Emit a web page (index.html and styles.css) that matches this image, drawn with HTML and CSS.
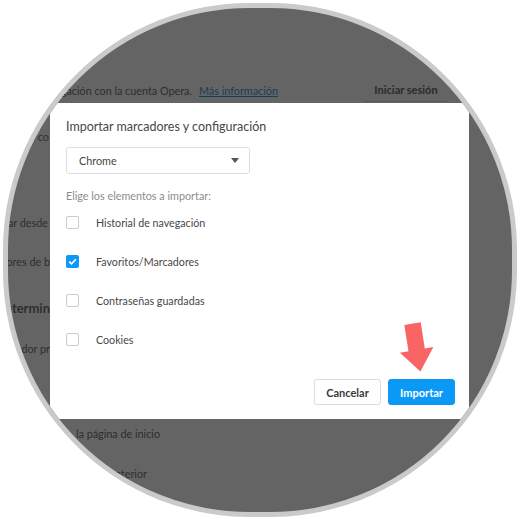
FILE: index.html
```html
<!DOCTYPE html>
<html lang="es">
<head>
<meta charset="utf-8">
<link rel="stylesheet" href="styles.css">
</head>
<body>
<div class="frame">
  <div class="page">
    <div class="topline">
      <div class="sync-wrap"><span>Sincroniza tus datos de navegación con la cuenta Opera.</span></div>
      <span class="more">Más información</span>
      <span class="signin">Iniciar sesión</span>
    </div>
    <div class="side">
      <div class="line l-co"><span>Bloquear anuncios y navegar hasta tres veces más rápido co</span></div>
      <div class="line l-desde"><span>Importar desde</span></div>
      <div class="line l-colores"><span>Colores de b</span></div>
      <div class="line l-term heading"><span>Navegador predetermin</span></div>
      <div class="line l-pr"><span>Convertir a Opera en mi navegador pr</span></div>
      <div class="line l-inicio"><span>la página de inicio</span></div>
      <div class="line l-anterior"><span>Recuperar la sesión anterior</span></div>
    </div>
  </div>

  <div class="dialog">
    <div class="dlg-title">Importar marcadores y configuración</div>
    <div class="select">
      <span>Chrome</span>
      <svg class="caret" width="8" height="5" viewBox="0 0 8 5"><polygon points="0,0 8,0 4,5" fill="#555"/></svg>
    </div>
    <div class="hint">Elige los elementos a importar:</div>
    <div class="options">
      <div class="opt"><span class="box"></span><span>Historial de navegación</span></div>
      <div class="opt"><span class="box checked"><svg width="13" height="13" viewBox="0 0 13 13"><path d="M3.2 6.6 L5.5 8.9 L9.9 4.3" fill="none" stroke="#fff" stroke-width="1.6"/></svg></span><span>Favoritos/Marcadores</span></div>
      <div class="opt"><span class="box"></span><span>Contraseñas guardadas</span></div>
      <div class="opt"><span class="box"></span><span>Cookies</span></div>
    </div>
    <div class="footer">
      <button class="btn cancel">Cancelar</button>
      <button class="btn primary">Importar</button>
    </div>
  </div>

  <svg class="arrow" width="42" height="58" viewBox="0 0 42 58"><polygon points="8.3,7 24.7,4.3 28.8,30.5 37.4,29 24.4,53.5 3.9,34.7 12.5,33.2" fill="#f96464"/></svg>
</div>
</body>
</html>
```

FILE: styles.css
```css
* { box-sizing: border-box; }
body {
  margin: 0;
  background: #ffffff;
  font-family: Lato, "Open Sans", sans-serif;
}
.frame {
  position: relative;
  width: 514px;
  height: 514px;
  margin: 3px;
  border: 5px solid #cacaca;
  border-radius: 48%;
  overflow: hidden;
  background: #646464;
}
.page {
  padding-top: 70px;
  color: #2e2e2e;
  font-size: 10.8px;
}
.topline {
  display: flex;
  align-items: center;
  height: 24px;
}
.sync-wrap {
  flex: none;
  width: 184px;
  display: flex;
  justify-content: flex-end;
  white-space: nowrap;
}
.more {
  margin-left: 7px;
  color: #143f5b;
  text-decoration: underline;
  white-space: nowrap;
}
.signin {
  margin-left: auto;
  margin-right: 64px;
  width: 84px;
  height: 24px;
  display: flex;
  align-items: center;
  justify-content: center;
  font-weight: 700;
  font-size: 11px;
  color: #2a2a2a;
  border-bottom: 1px solid #575757;
}
.side {
  display: flex;
  flex-direction: column;
  margin-top: 24px;
}
.line {
  display: flex;
  justify-content: flex-end;
  align-items: center;
  height: 20px;
  white-space: nowrap;
  flex: none;
}
.heading { font-weight: 700; font-size: 13px; }
.l-co { width: 41px; }
.l-desde { width: 40px; margin-top: 66px; }
.l-colores { width: 42px; margin-top: 19px; }
.l-term { width: 42px; margin-top: 27px; }
.l-pr { width: 42px; margin-top: 20px; }
.l-inicio { width: 152px; margin-top: 65px; }
.l-anterior { width: 139px; margin-top: 20px; }

.dialog {
  position: absolute;
  left: 42px;
  top: 95px;
  width: 419px;
  height: 316px;
  background: #ffffff;
  padding: 14px 14px 14px 16px;
  display: flex;
  flex-direction: column;
  color: #444;
}
.dlg-title {
  font-size: 12.5px;
  line-height: 20px;
  color: #474747;
}
.select {
  margin-top: 10px;
  width: 184px;
  height: 27px;
  border: 1px solid #dedede;
  border-radius: 3px;
  display: flex;
  align-items: center;
  justify-content: space-between;
  padding: 0 10px 0 12px;
  font-size: 10.8px;
  color: #444;
}
.hint {
  margin-top: 13px;
  line-height: 18px;
  font-size: 10.8px;
  color: #8c8c8c;
}
.options {
  margin-top: 7px;
  display: flex;
  flex-direction: column;
  gap: 19px;
}
.opt {
  display: flex;
  align-items: center;
  height: 20px;
  font-size: 10.7px;
  color: #474747;
}
.box {
  flex: none;
  width: 13px;
  height: 13px;
  border: 1.5px solid #cbcbcb;
  border-radius: 2px;
  margin-right: 17px;
  display: flex;
}
.box.checked {
  border: none;
  background: #0b98f6;
}
.footer {
  margin-top: auto;
  display: flex;
  justify-content: flex-end;
  gap: 7px;
}
.btn {
  width: 67px;
  height: 26px;
  border-radius: 3px;
  font-family: Lato, "Open Sans", sans-serif;
  font-size: 11px;
  font-weight: 700;
  padding: 0;
}
.cancel {
  background: #ffffff;
  border: 1px solid #dcdcdc;
  color: #3a3a3a;
}
.primary {
  background: #0b99f7;
  border: 1px solid #0b99f7;
  color: #ffffff;
}
.arrow {
  position: absolute;
  left: 388px;
  top: 310px;
}
```
